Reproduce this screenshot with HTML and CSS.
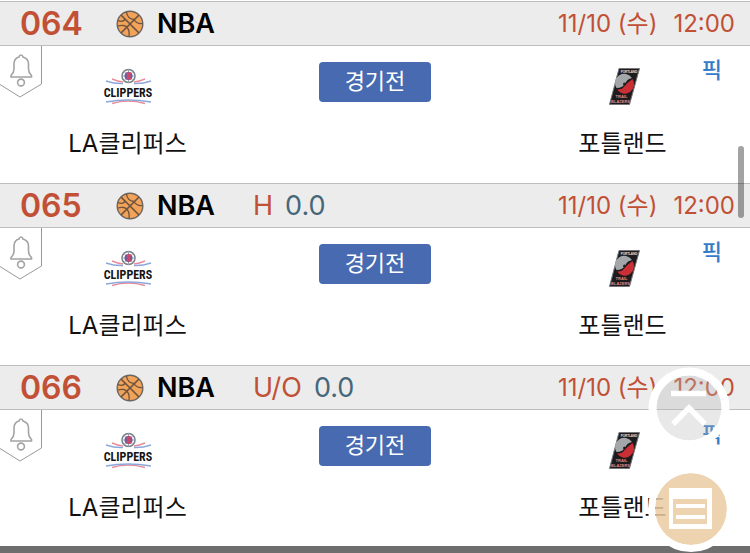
FILE: index.html
```html
<!DOCTYPE html>
<html lang="ko">

<head>
    <meta charset="UTF-8">
    <meta name="viewport" content="width=device-width, initial-scale=1.0">
    <title>NBA 경기</title>
    <link rel="stylesheet" href="styles.css">
</head>

<body>

    <!-- shared drawings -->
    <svg class="sprite" aria-hidden="true">
        <symbol id="ball" viewBox="0 0 28 28">
            <circle cx="14" cy="14" r="12.8" fill="#f3a357" stroke="#6b6663" stroke-width="1.4"/>
            <g fill="none" stroke="#6b5442" stroke-width="1.3">
                <path d="M5 5l18 18M23 5L5 23" stroke-width="1.7"/>
                <path d="M10.500 2C11 6.500 14 9 18 9.500"/>
                <path d="M18 9.500C20 13 23 14 26.500 13.500"/>
                <path d="M2 16C6 14.500 10 15.500 11.500 18C13 20 13.500 23 13 26.500"/>
                <path d="M2 10.500C5 12 8 11 9.500 9"/>
            </g>
        </symbol>
        <symbol id="bell" viewBox="0 0 42 52">
            <path d="M41.500 0V38L20 51L0 38.500" fill="#fff" stroke="#999" stroke-width="1"/>
            <g fill="none" stroke="#a3a3a3" stroke-width="1.600">
                <path d="M21 9C19.500 9 19.200 10 19 11C15.500 12 14 15 14 18V23C14 26 12.500 28 11 29.500V31H31.500V29.500C30 28 28.500 26 28.500 23V18C28.500 15 26.500 12 23 11C22.800 10 22.500 9 21 9Z"/>
                <circle cx="21" cy="36.500" r="3.400"/>
            </g>
        </symbol>
        <symbol id="clippers" viewBox="0 0 48 40">
            <circle cx="25.500" cy="10" r="6.500" fill="#fff" stroke="#777f88" stroke-width="1.500"/>
            <path d="M25.500 3V17M18.500 10H32.500M20.500 5L30.500 15M30.500 5L20.500 15" stroke="#9aa0a8" stroke-width="1"/>
            <circle cx="25.500" cy="10" r="4" fill="#4b67b5"/>
            <path d="M28 7.500H24.500V12.500H28M24.500 10H27.500" fill="none" stroke="#e3415c" stroke-width="1.800"/>
            <path d="M9 13Q15 15.500 20 16M42 13Q36 15.500 31 16M9 37.500Q25 32.500 42 37.500" fill="none" stroke="#e88d99" stroke-width="1.400"/>
            <path d="M3 15Q12 18 20 17.500M48 15Q39 18 31 17.500M3 36Q25 32 48 36" fill="none" stroke="#8ba8dc" stroke-width="1.400"/>
            <text x="25" y="31" text-anchor="middle" class="clippers-text">CLIPPERS</text>
        </symbol>
        <symbol id="blazers" viewBox="0 0 48 40">
            <path d="M21 2.500H41.500L31.500 38.500H11.500Z" fill="#1d1b1d" stroke="#77777a" stroke-width="1"/>
            <path d="M18.500 22A9 9 0 0 1 34 12Q29 13 27.500 17Q25 22 18.500 22Z" fill="#a3a7aa"/>
            <path d="M34.500 13A9 9 0 0 1 19 23.500Q24 24 26.500 20Q29 17 34.500 13Z" fill="#cc2e35"/>
            <circle cx="26.500" cy="18" r="1.500" fill="#222"/>
            <text x="31" y="7" text-anchor="middle" class="blazers-top">PORTLAND</text>
            <text x="23.500" y="32" text-anchor="middle" class="blazers-text">TRAIL</text>
            <text x="22.500" y="37" text-anchor="middle" class="blazers-text">BLAZERS</text>
        </symbol>
    </svg>

    <main>
        <section class="game">
            <header class="game-head">
                <span class="no">064</span>
                <svg class="ball"><use href="#ball"/></svg>
                <span class="league">NBA</span>
                <span class="date">11/10 (수)</span>
                <span class="time">12:00</span>
            </header>
            <div class="game-body">
                <button class="alarm" aria-label="알림"><svg><use href="#bell"/></svg></button>
                <div class="team">
                    <svg class="logo"><use href="#clippers"/></svg>
                    <span>LA클리퍼스</span>
                </div>
                <button class="status">경기전</button>
                <div class="team">
                    <svg class="logo"><use href="#blazers"/></svg>
                    <span>포틀랜드</span>
                </div>
                <a class="pick" href="#">픽</a>
            </div>
        </section>

        <section class="game">
            <header class="game-head">
                <span class="no">065</span>
                <svg class="ball"><use href="#ball"/></svg>
                <span class="league">NBA</span>
                <span class="type">H</span>
                <span class="line">0.0</span>
                <span class="date">11/10 (수)</span>
                <span class="time">12:00</span>
            </header>
            <div class="game-body">
                <button class="alarm" aria-label="알림"><svg><use href="#bell"/></svg></button>
                <div class="team">
                    <svg class="logo"><use href="#clippers"/></svg>
                    <span>LA클리퍼스</span>
                </div>
                <button class="status">경기전</button>
                <div class="team">
                    <svg class="logo"><use href="#blazers"/></svg>
                    <span>포틀랜드</span>
                </div>
                <a class="pick" href="#">픽</a>
            </div>
        </section>

        <section class="game">
            <header class="game-head">
                <span class="no">066</span>
                <svg class="ball"><use href="#ball"/></svg>
                <span class="league">NBA</span>
                <span class="type">U/O</span>
                <span class="line">0.0</span>
                <span class="date">11/10 (수)</span>
                <span class="time">12:00</span>
            </header>
            <div class="game-body">
                <button class="alarm" aria-label="알림"><svg><use href="#bell"/></svg></button>
                <div class="team">
                    <svg class="logo"><use href="#clippers"/></svg>
                    <span>LA클리퍼스</span>
                </div>
                <button class="status">경기전</button>
                <div class="team">
                    <svg class="logo"><use href="#blazers"/></svg>
                    <span>포틀랜드</span>
                </div>
                <a class="pick" href="#">픽</a>
            </div>
        </section>
    </main>

    <div class="bottom-bar"></div>
    <div class="scroll-thumb"></div>

    <!-- floating buttons -->
    <button class="float go-top" aria-label="맨 위로">
        <svg viewBox="0 0 82 82">
            <circle cx="41" cy="41" r="32.500" fill="#b7b7b7" fill-opacity=".32"/>
            <circle cx="41" cy="41" r="36.500" fill="none" stroke="#fff" stroke-width="8"/>
            <path d="M23 26.500H58M25 57L41 41L57 57" fill="none" stroke="#fff" stroke-width="5.500"/>
        </svg>
    </button>
    <button class="float go-list" aria-label="목록">
        <svg viewBox="0 0 88 88">
            <circle cx="44" cy="44" r="36" fill="#eacba2" fill-opacity=".85"/>
            <circle cx="44" cy="44" r="39.500" fill="none" stroke="#fff" stroke-width="7"/>
            <rect x="22" y="23" width="43" height="41" fill="#fff"/>
            <rect x="26" y="34" width="34" height="25" fill="#edd3af"/>
            <path d="M29 41H58M29 52H58" stroke="#fff" stroke-width="4"/>
        </svg>
    </button>

</body>

</html>
```
FILE: styles.css
```css
* {
    box-sizing: border-box;
}

body {
    margin: 0;
    padding-top: 1px;
    background-color: #fff;
    color: #111;
    font-family: Inter, "Noto Sans CJK KR", sans-serif;
    overflow: hidden;
}

button {
    padding: 0;
    border: 0;
    background: none;
    font-family: inherit;
    cursor: pointer;
}

svg {
    display: block;
}

.sprite {
    display: none;
}

.game-head {
    display: flex;
    align-items: center;
    height: 45px;
    padding: 0 15px 0 20px;
    border-top: 1px solid #bdbdbd;
    border-bottom: 1px solid #bdbdbd;
    background-color: #ececec;
    line-height: 32px;
    white-space: nowrap;
}

.no {
    min-width: 96px;
    color: #c15035;
    font-size: 32px;
    font-weight: 600;
}

.ball {
    width: 28px;
    height: 28px;
    margin-right: 13px;
}

.league {
    color: #000;
    font-size: 27px;
    font-weight: 600;
}

.type {
    margin-left: 38px;
    color: #c15035;
    font-size: 27px;
}

.line {
    margin-left: 12px;
    color: #456779;
    font-size: 27px;
}

.date, .time {
    color: #c15035;
    font-size: 24px;
}

.date {
    margin-left: auto;
}

.time {
    margin-left: 16px;
}

.game-body {
    position: relative;
    display: grid;
    grid-template-columns: 34% 32% 34%;
    align-items: start;
    justify-items: center;
    height: 137px;
    padding-top: 16px;
}

.alarm {
    position: absolute;
    top: 0;
    left: 0;
}

.alarm svg {
    width: 42px;
    height: 52px;
}

.team {
    display: flex;
    flex-direction: column;
    align-items: center;
    padding-top: 4px;
    font-size: 24px;
    line-height: 36px;
}

.logo {
    width: 48px;
    height: 40px;
    margin-bottom: 20px;
    overflow: visible;
}

.status {
    width: 112px;
    height: 40px;
    padding-bottom: 3px;
    border-radius: 4px;
    background-color: #476ab0;
    color: #fff;
    font-size: 22px;
    line-height: 36px;
}

.pick {
    position: absolute;
    top: 8px;
    right: 28px;
    color: #357cc8;
    font-size: 22px;
    font-weight: 500;
    line-height: 32px;
    text-decoration: none;
}

#clippers {
    overflow: visible;
}

.clippers-text {
    fill: #151515;
    font: bold 12px "Roboto Condensed", "Liberation Sans Narrow", sans-serif;
}

.blazers-top, .blazers-text {
    fill: #e6e6e6;
    font: bold 3px "Liberation Sans", sans-serif;
}

.blazers-text {
    fill: #df8a8d;
    font-size: 4px;
}

.bottom-bar {
    position: fixed;
    right: 0;
    bottom: 0;
    left: 0;
    height: 7px;
    background-color: #6e6e6e;
}

.scroll-thumb {
    position: fixed;
    top: 146px;
    right: 6px;
    width: 6px;
    height: 72px;
    border-radius: 3px;
    background-color: rgba(0, 0, 0, 0.36);
}

.float {
    position: fixed;
}

.go-top {
    right: 20px;
    bottom: 104px;
}

.go-top svg {
    width: 82px;
    height: 82px;
}

.go-list {
    right: 15px;
    bottom: 0;
}

.go-list svg {
    width: 88px;
    height: 88px;
}
```
